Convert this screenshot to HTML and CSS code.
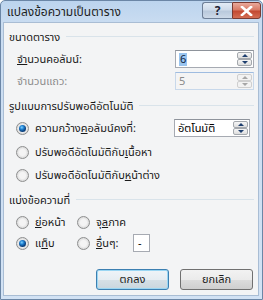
FILE: index.html
```html
<!DOCTYPE html>
<html>
<head>
<meta charset="utf-8">
<link rel="stylesheet" href="styles.css">
</head>
<body>
<div class="window">
  <div class="titlebar">
    <span class="title">แปลงข้อความเป็นตาราง</span>
    <div class="tbtns">
      <div class="tbtn help">?</div>
      <div class="tbtn close">
        <svg width="13" height="10" viewBox="0 0 13 10"><path d="M2 1 L11 9 M11 1 L2 9" stroke="#fff" stroke-width="2.6" stroke-linecap="square" fill="none"/></svg>
      </div>
    </div>
  </div>
  <div class="client">
    <div class="ghead h1"><span>ขนาดตาราง</span><i class="gline"></i></div>
    <div class="row r-col">
      <span class="lbl"><u>จ</u>ำนวนคอลัมน์:</span>
      <div class="spin"><span class="val"><span class="sel">6</span></span><div class="sbtns"><div class="sb up"></div><div class="sb dn"></div></div></div>
    </div>
    <div class="row r-row">
      <span class="lbl dis">จำนวนแถว:</span>
      <div class="spin disabled"><span class="val">5</span><div class="sbtns"><div class="sb up"></div><div class="sb dn"></div></div></div>
    </div>
    <div class="ghead h2"><span>รูปแบบการปรับพอดีอัตโนมัติ</span><i class="gline"></i></div>
    <div class="row ra1">
      <span class="radio on"></span><span class="rl">ความกว้าง<u>ค</u>อลัมน์คงที่:</span>
      <div class="spin combo"><span class="val">อัตโนมัติ</span><div class="sbtns"><div class="sb up"></div><div class="sb dn"></div></div></div>
    </div>
    <div class="row ra2"><span class="radio"></span><span class="rl">ปรับพอดีอัตโนมัติกับ<u>เ</u>นื้อหา</span></div>
    <div class="row ra3"><span class="radio"></span><span class="rl">ปรับพอดีอัตโนมัติกับ<u>ห</u>น้าต่าง</span></div>
    <div class="ghead h3"><span>แบ่งข้อความที่</span><i class="gline"></i></div>
    <div class="row ra4">
      <span class="radio"></span><span class="rl w1"><u>ย่</u>อหน้า</span>
      <span class="radio r2"></span><span class="rl">จุ<u>ล</u>ภาค</span>
    </div>
    <div class="row ra5">
      <span class="radio on"></span><span class="rl w1">แ<u>ท็</u>บ</span>
      <span class="radio r2"></span><span class="rl w2"><u>อื่</u>นๆ:</span>
      <span class="other">-</span>
    </div>
    <div class="buttons">
      <div class="btn def">ตกลง</div>
      <div class="btn">ยกเลิก</div>
    </div>
  </div>
</div>
</body>
</html>
```
FILE: styles.css
```css
* { box-sizing: border-box; }
html, body { margin: 0; padding: 0; background: #fff; }
body { font-family: Tahoma, "Noto Sans Thai", "Leelawadee UI", "DejaVu Sans", sans-serif; font-size: 11px; color: #000; }
.window {
  width: 263px; height: 300px;
  border: 1px solid #6b86a6;
  border-radius: 5px 5px 0 0;
  background: linear-gradient(#bcd4ee 0px, #c9dcf1 22px, #d2e2f4 100%);
  padding: 0 3px 3px 2px;
  display: flex; flex-direction: column;
}
.titlebar { height: 21px; display: flex; align-items: center; justify-content: space-between; padding-left: 4px; flex: none; }
.title { font-size: 12px; color: #1e1e1e; margin-top: 1px; }
.tbtns { display: flex; align-self: flex-start; margin-top: 1px; margin-right: -2px; }
.tbtn { height: 17px; display: flex; align-items: center; justify-content: center; border: 1px solid #6e7f97; }
.help { width: 30px; border-radius: 3px 0 0 3px; border-right: none; background: linear-gradient(#e3ecf6 0%, #cfdbea 45%, #b9c9dc 55%, #cdd9e8 100%); color: #223; font-weight: bold; font-size: 12px; }
.close { width: 29px; border-radius: 0 3px 3px 0; border-color: #7a3b33; background: linear-gradient(#e9a99b 0%, #d97b66 45%, #c34a33 55%, #d36d53 100%); }
.client {
  flex: 1; background: #f3f4f5;
  border: 1px solid #a9bdd4;
  padding: 0 4px 0 5px;
  display: flex; flex-direction: column;
}
.ghead { height: 14px; display: flex; align-items: center; color: #1a1a1a; flex: none; }
.ghead span { white-space: nowrap; }
.gline { flex: 1; height: 1px; background: #d9e3ea; margin-left: 6px; margin-top: -2px; }
.h1 { margin-top: 7px; }
.h2 { margin-top: 9px; }
.h3 { margin-top: 9px; }
.row { height: 18px; display: flex; align-items: center; flex: none; }
.r-col { margin-top: 6px; }
.r-row { margin-top: 4px; }
.ra1 { margin-top: 6px; }
.ra2 { margin-top: 6px; }
.ra3 { margin-top: 5px; }
.ra4 { margin-top: 6px; }
.ra5 { margin-top: 3px; }
.lbl { margin-left: 8px; flex: 1; color: #1a1a1a; }
.lbl.dis { color: #8d8d8d; }
u { text-decoration: underline; text-underline-offset: 1px; }
.spin {
  width: 79px; height: 18px; border: 1px solid #a6aab2; border-top-color: #8e939b;
  background: #fff; display: flex; align-items: stretch; padding: 1px;
}
.spin .val { flex: 1; display: flex; align-items: center; padding-left: 2px; }
.sel { background: #99c4ef; color: #0c2342; padding: 0 1px; line-height: 13px; }
.spin.disabled { background: #f4f4f4; border-color: #c8d8ea; border-top-color: #9fbce0; }
.spin.disabled .val { color: #8a8a8a; }
.sbtns { width: 15px; display: flex; flex-direction: column; }
.sb { flex: 1; border: 1px solid #a4a8ad; background: linear-gradient(#f6f6f6, #dedede); display: flex; align-items: center; justify-content: center; border-radius: 2px; }
.sb::after { content: ""; width: 0; height: 0; border-left: 3px solid transparent; border-right: 3px solid transparent; }
.sb.up::after { border-bottom: 3px solid #1f3f6f; }
.sb.dn::after { border-top: 3px solid #1f3f6f; }
.disabled .sb { border-color: #cfcfcf; background: #f2f2f2; }
.disabled .sb.up::after { border-bottom-color: #a6a6a6; }
.disabled .sb.dn::after { border-top-color: #a6a6a6; }
.combo { width: 76px; margin-right: 4px; }
.radio {
  width: 13px; height: 13px; border-radius: 50%; flex: none;
  border: 1px solid #8e8f8f; margin-left: 7px; margin-right: 6px;
  background: radial-gradient(circle at 50% 50%, #f4f4f4 0 3px, #d7d7d7 6px);
  display: flex; align-items: center; justify-content: center;
}
.radio.r2 { margin-left: 0; }
.radio.on::after { content: ""; width: 7px; height: 7px; border-radius: 50%; background: radial-gradient(circle at 40% 35%, #7fd2ff 0, #1e7fd0 2px, #0b3f7a 4px); }
.rl { flex: 1; color: #1a1a1a; white-space: nowrap; }
.rl.w1 { flex: none; width: 42px; }
.rl.w2 { flex: none; width: 37px; }
.other { width: 17px; height: 18px; border: 1px solid #a6aab2; background: #fff; display: flex; align-items: center; padding-left: 4px; margin-right: auto; flex: none; }
.buttons { margin-top: 17px; display: flex; justify-content: flex-end; gap: 11px; padding-right: 1px; }
.btn {
  width: 73px; height: 21px; border: 1px solid #707070; border-radius: 3px;
  background: linear-gradient(#f2f2f2 0%, #ebebeb 50%, #dddddd 51%, #cfcfcf 100%);
  display: flex; align-items: center; justify-content: center; color: #1a1a1a;
}
.btn.def { border-color: #3c7fb1; box-shadow: inset 0 0 0 1px #9ad6f3; background: linear-gradient(#eef4f8 0%, #e6edf2 50%, #d6e0e6 51%, #c9d6de 100%); }
```
